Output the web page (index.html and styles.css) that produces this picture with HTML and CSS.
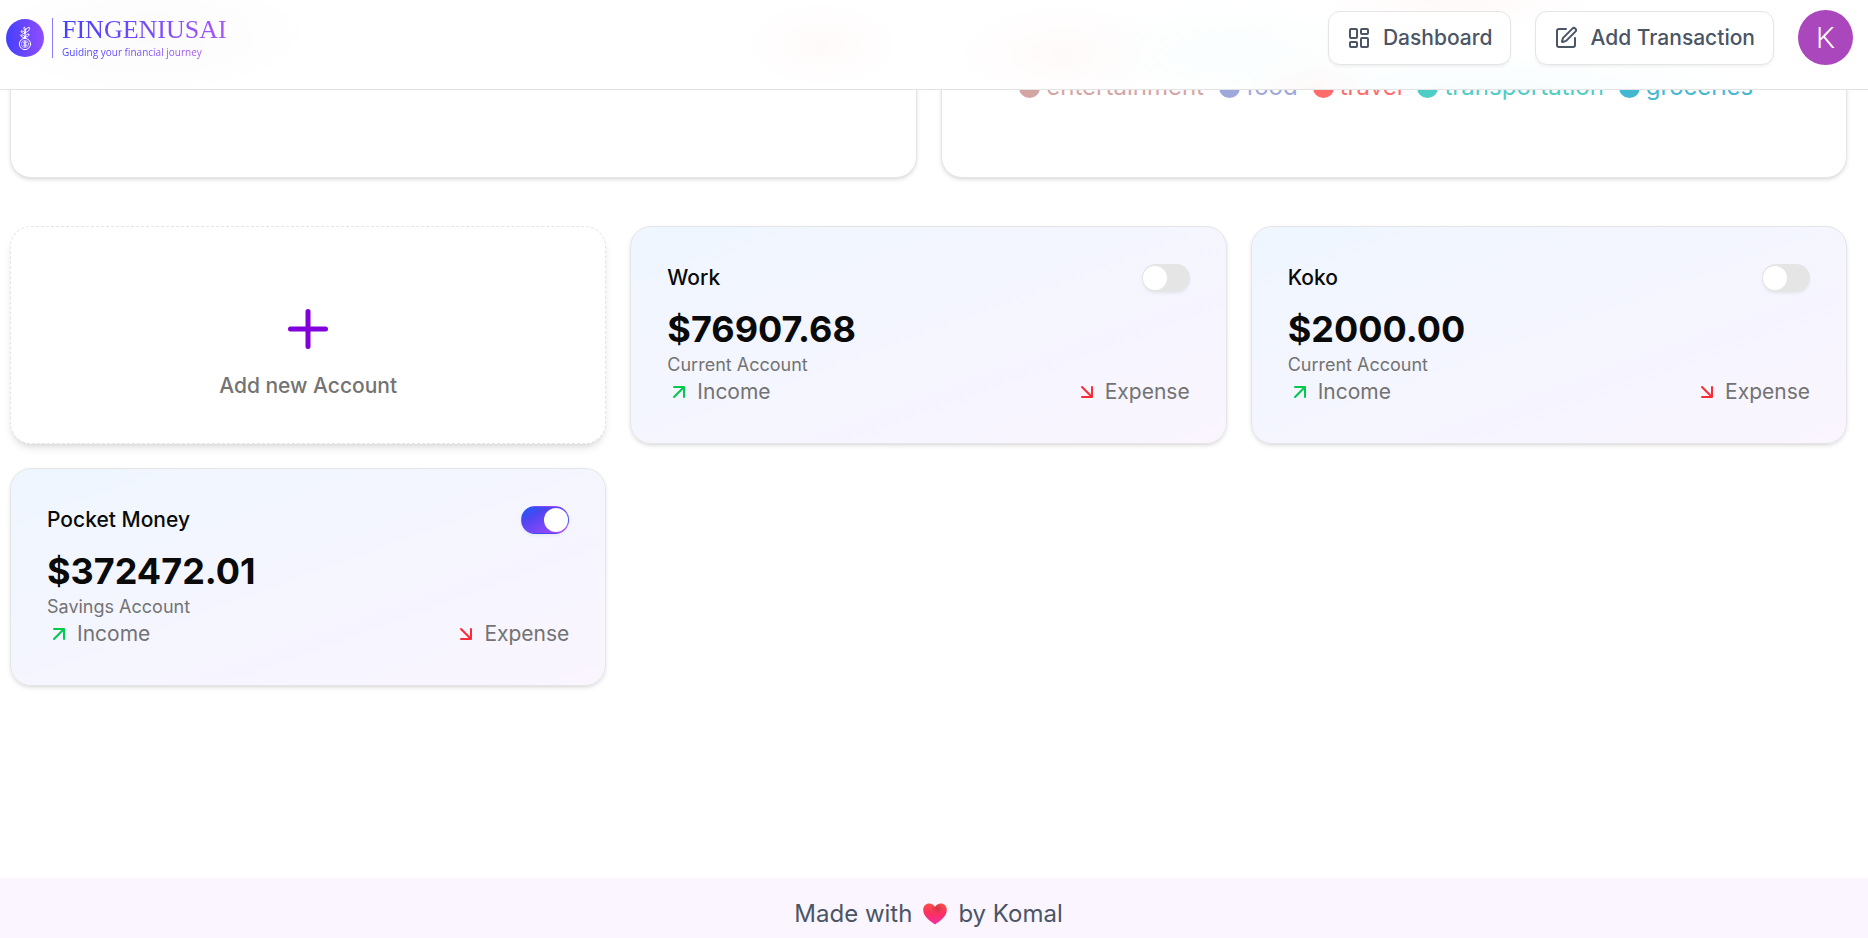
FILE: index.html
```html
<!DOCTYPE html>
<html lang="en">
<head>
<meta charset="utf-8">
<meta name="viewport" content="width=device-width, initial-scale=1">
<title>FinGeniusAI</title>
<link rel="stylesheet" href="styles.css">
</head>
<body>
<header class="header">
  <a class="brand" href="#">
    <svg class="brand-mark" viewBox="0 0 38 38" aria-hidden="true">
      <defs>
        <linearGradient id="brand-fill" x1="0" x2="1" y1="0" y2="0">
          <stop offset="0" stop-color="#4340ff"/>
          <stop offset="1" stop-color="#914dff"/>
        </linearGradient>
      </defs>
      <circle cx="19" cy="19" r="19" fill="url(#brand-fill)"/>
      <g fill="none" stroke="#fff" stroke-width="1" stroke-linecap="round" stroke-linejoin="round">
        <circle cx="19" cy="25" r="5.6"/>
        <circle cx="19" cy="25" r="3.6" stroke-width=".6"/>
        <path d="M20.5 23.4c-.6-.7-3-.7-3 .5s3 .8 3 2.100-2.400 1.200-3 .4M19 22.300v5.400"/>
        <path d="M19 19.400V12"/>
        <path d="M19 18.500c-2.600.3-4.200-.7-4.300-2.500 2.500-.2 4.100.6 4.300 2.500zM19 18c2.600.1 4.100-1 4.100-2.800-2.400-.1-4 .8-4.100 2.800zM19 14.500c-2.400.2-3.800-.8-3.900-2.500 2.300-.2 3.700.6 3.900 2.500zM19 13.400c0-2.400 1.300-4.500 4.400-5 .6 2.600-1.300 4.800-4.400 5zM19 11.200c-1.300-.7-1.400-1.900-.7-3.100 1.200.8 1.500 1.900.7 3.100z"/>
      </g>
    </svg>
    <span class="brand-rule"></span>
    <span class="brand-text">
      <span class="brand-name">FINGENIUSAI</span>
      <span class="brand-tag">Guiding your financial journey</span>
    </span>
  </a>
  <nav class="nav">
    <a class="btn" href="#">
      <svg class="icon" viewBox="0 0 24 24" aria-hidden="true"><rect width="7" height="9" x="3" y="3" rx="1"/><rect width="7" height="5" x="14" y="3" rx="1"/><rect width="7" height="9" x="14" y="12" rx="1"/><rect width="7" height="5" x="3" y="16" rx="1"/></svg>
      Dashboard
    </a>
    <a class="btn" href="#">
      <svg class="icon" viewBox="0 0 24 24" aria-hidden="true"><path d="M12 3H5a2 2 0 0 0-2 2v14a2 2 0 0 0 2 2h14a2 2 0 0 0 2-2v-7"/><path d="M18.375 2.625a1 1 0 0 1 3 3l-9.013 9.014a2 2 0 0 1-.853.505l-2.873.84a.5.5 0 0 1-.62-.62l.84-2.873a2 2 0 0 1 .506-.852z"/></svg>
      Add Transaction
    </a>
    <button class="avatar" type="button" aria-label="Open user menu">K</button>
  </nav>
</header>

<main class="main">
  <section class="charts">
    <div class="chart-card"></div>
    <div class="chart-card">
      <ul class="legend">
        <li class="legend-item entertainment"><span class="dot"></span>entertainment</li>
        <li class="legend-item food"><span class="dot"></span>food</li>
        <li class="legend-item travel"><span class="dot"></span>travel</li>
        <li class="legend-item transportation"><span class="dot"></span>transportation</li>
        <li class="legend-item groceries"><span class="dot"></span>groceries</li>
      </ul>
    </div>
  </section>

  <section class="accounts">
    <button class="add-card" type="button">
      <svg class="add-icon" viewBox="0 0 24 24" aria-hidden="true"><path d="M5 12h14M12 5v14"/></svg>
      Add new Account
    </button>

    <article class="account">
      <div class="account-head">
        <label class="account-name" for="default-work">Work</label>
        <input class="switch" id="default-work" type="checkbox" role="switch">
      </div>
      <div class="balance">$76907.68</div>
      <p class="account-type">Current Account</p>
      <div class="flows">
        <span class="flow"><svg class="icon up" viewBox="0 0 24 24" aria-hidden="true"><path d="M7 7h10v10M7 17 17 7"/></svg>Income</span>
        <span class="flow"><svg class="icon down" viewBox="0 0 24 24" aria-hidden="true"><path d="m7 7 10 10M17 7v10H7"/></svg>Expense</span>
      </div>
    </article>

    <article class="account">
      <div class="account-head">
        <label class="account-name" for="default-koko">Koko</label>
        <input class="switch" id="default-koko" type="checkbox" role="switch">
      </div>
      <div class="balance">$2000.00</div>
      <p class="account-type">Current Account</p>
      <div class="flows">
        <span class="flow"><svg class="icon up" viewBox="0 0 24 24" aria-hidden="true"><path d="M7 7h10v10M7 17 17 7"/></svg>Income</span>
        <span class="flow"><svg class="icon down" viewBox="0 0 24 24" aria-hidden="true"><path d="m7 7 10 10M17 7v10H7"/></svg>Expense</span>
      </div>
    </article>

    <article class="account">
      <div class="account-head">
        <label class="account-name" for="default-pocket">Pocket Money</label>
        <input class="switch" id="default-pocket" type="checkbox" role="switch" checked>
      </div>
      <div class="balance">$372472.01</div>
      <p class="account-type">Savings Account</p>
      <div class="flows">
        <span class="flow"><svg class="icon up" viewBox="0 0 24 24" aria-hidden="true"><path d="M7 7h10v10M7 17 17 7"/></svg>Income</span>
        <span class="flow"><svg class="icon down" viewBox="0 0 24 24" aria-hidden="true"><path d="m7 7 10 10M17 7v10H7"/></svg>Expense</span>
      </div>
    </article>
  </section>
</main>

<footer class="footer">
  <span>Made with</span>
  <svg class="heart" viewBox="0 0 24 22" role="img" aria-label="love">
    <defs>
      <linearGradient id="heart-fill" x1="0" x2="0" y1="0" y2="1">
        <stop offset="0" stop-color="#f8504a"/>
        <stop offset=".5" stop-color="#fb2f60"/>
        <stop offset="1" stop-color="#f22fa8"/>
      </linearGradient>
      <radialGradient id="heart-shade" cx=".6" cy=".22" r=".26">
        <stop offset="0" stop-color="#b52a3c" stop-opacity=".6"/>
        <stop offset="1" stop-color="#b52a3c" stop-opacity="0"/>
      </radialGradient>
      <path id="heart-shape" d="M12 21.500C8 18.800.2 13.600.2 7 .2 3.200 2.900.6 6.200.6c2.600 0 4.600 1.300 5.800 3.300C13.200 1.900 15.200.6 17.800.6c3.300 0 6 2.600 6 6.400 0 6.600-7.800 11.800-11.800 14.500z"/>
    </defs>
    <use href="#heart-shape" fill="url(#heart-fill)"/>
    <use href="#heart-shape" fill="url(#heart-shade)"/>
  </svg>
  <span>by Komal</span>
</footer>
</body>
</html>
```

FILE: styles.css
```css
* {
  box-sizing: border-box;
}

body {
  margin: 0;
  min-height: 100vh;
  display: flex;
  flex-direction: column;
  background: #fff;
  color: #0a0a0a;
  font-family: Inter, "Liberation Sans", sans-serif;
  font-size: 21px;
  line-height: 30px;
}

.header {
  position: sticky;
  top: 0;
  z-index: 10;
  display: flex;
  align-items: center;
  justify-content: space-between;
  padding: 10px 15px 24px 6px;
  border-bottom: 1px solid #e3e3e3;
  background:
    radial-gradient(ellipse 170px 60px at 8% 40%, #fbfbfb, transparent),
    radial-gradient(ellipse 80px 44px at 44% 50%, #fffafa, transparent),
    radial-gradient(ellipse 110px 50px at 57% 60%, #fffafa, transparent),
    radial-gradient(ellipse 170px 56px at 66% 60%, #fafefe, transparent),
    radial-gradient(ellipse 140px 30px at 78% 0%, #fff9f9, transparent),
    radial-gradient(ellipse 60px 40px at 70% 100%, #fff7f7, transparent),
    radial-gradient(ellipse 280px 40px at 80% 100%, #f8fdfe, transparent),
    #fff;
}

.brand {
  display: flex;
  align-items: center;
  gap: 8px;
  text-decoration: none;
}

.brand-mark {
  width: 38px;
  height: 38px;
}

.brand-rule {
  width: 1px;
  height: 40px;
  background: #8a7bff;
}

.brand-text {
  display: flex;
  flex-direction: column;
  padding-left: 1px;
}

.brand-name,
.brand-tag {
  align-self: flex-start;
  background: linear-gradient(90deg, #4340ff, #a855f7);
  background-clip: text;
  color: transparent;
}

.brand-name {
  font-family: "Liberation Serif", serif;
  font-size: 26px;
  line-height: 28px;
}

.brand-tag {
  font-family: "Open Sans", sans-serif;
  font-size: 10px;
  line-height: 16px;
}

.nav {
  display: flex;
  align-items: center;
  gap: 24px;
}

.btn {
  display: flex;
  align-items: center;
  gap: 12px;
  padding: 11px 18px;
  border: 1px solid #e5e5e5;
  border-radius: 12px;
  background: #fff;
  box-shadow: 0 2px 3px rgba(0, 0, 0, 0.05);
  color: #4a5565;
  font-weight: 500;
  text-decoration: none;
}

.icon {
  flex: none;
  width: 24px;
  height: 24px;
  fill: none;
  stroke: currentColor;
  stroke-width: 2;
  stroke-linecap: round;
  stroke-linejoin: round;
}

.avatar {
  width: 55px;
  height: 55px;
  padding: 0;
  border: 0;
  border-radius: 50%;
  background: #ab47bc;
  color: #fff;
  font-family: Roboto, sans-serif;
  font-size: 30px;
  font-weight: 300;
  line-height: 55px;
}

.main {
  flex: 1;
  display: flex;
  flex-direction: column;
  gap: 48px;
  padding: 0 21px 48px 10px;
}

/* The chart cards run on beneath the sticky header. */
.charts {
  display: grid;
  grid-template-columns: 1fr 1fr;
  gap: 24px;
  margin-top: -30px;
}

.chart-card {
  padding: 8px 16px 72px;
  border: 1px solid #e5e5e5;
  border-radius: 21px;
  background: #fff;
  box-shadow: 0 2px 4px rgba(0, 0, 0, 0.1), 0 2px 3px -2px rgba(0, 0, 0, 0.1);
}

.legend {
  display: flex;
  justify-content: center;
  margin: 0;
  padding: 0;
  list-style: none;
  font-size: 24px;
  line-height: 36px;
}

.legend-item {
  display: flex;
  align-items: center;
  gap: 6px;
  margin-right: 15px;
}

.dot {
  width: 21px;
  height: 21px;
  border-radius: 50%;
  background: currentColor;
}

.entertainment { color: #d4a5a5; }
.food { color: #9fa8da; }
.travel { color: #ff6b6b; }
.transportation { color: #4ecdc4; }
.groceries { color: #45b7d1; }

.accounts {
  display: grid;
  grid-template-columns: repeat(3, 1fr);
  gap: 24px;
}

.add-card {
  display: flex;
  flex-direction: column;
  align-items: center;
  justify-content: center;
  gap: 12px;
  padding: 30px 0 0;
  border: 1px dashed #e5e5e5;
  border-radius: 21px;
  background: #fff;
  box-shadow: 0 6px 9px -2px rgba(0, 0, 0, 0.1), 0 3px 6px -3px rgba(0, 0, 0, 0.1);
  color: #737373;
  font: inherit;
  font-weight: 500;
}

.add-icon {
  width: 60px;
  height: 60px;
  fill: none;
  stroke: #8200db;
  stroke-width: 2;
  stroke-linecap: round;
}

.account {
  padding: 36px;
  border: 1px solid #e5e5e5;
  border-radius: 21px;
  background: linear-gradient(to bottom right, #eff6ff, #faf5ff);
  box-shadow: 0 2px 4px rgba(0, 0, 0, 0.1), 0 2px 3px -2px rgba(0, 0, 0, 0.1);
}

.account-head {
  display: flex;
  align-items: center;
  justify-content: space-between;
  margin-bottom: 12px;
}

.account-name {
  font-weight: 500;
}

.switch {
  appearance: none;
  display: flex;
  align-items: center;
  width: 48px;
  height: 28px;
  margin: 0;
  border: 1px solid transparent;
  border-radius: 14px;
  background: #e5e5e5;
  box-shadow: 0 2px 3px rgba(0, 0, 0, 0.05);
}

.switch::before {
  content: "";
  width: 24px;
  height: 24px;
  border-radius: 50%;
  background: #fff;
}

.switch:checked {
  justify-content: flex-end;
  background: linear-gradient(to bottom right, #155dfc, #4f46f0 30%, #9348ff 80%, #ad46ff);
}

.balance {
  font-size: 36px;
  font-weight: 700;
  line-height: 48px;
}

.account-type {
  margin: 0;
  color: #737373;
  font-size: 18px;
  line-height: 24px;
}

.flows {
  display: flex;
  justify-content: space-between;
  color: #737373;
}

.flow {
  display: flex;
  align-items: center;
  gap: 6px;
}

.up { color: #00c950; }
.down { color: #fb2c36; }

.footer {
  display: flex;
  align-items: center;
  justify-content: center;
  gap: 11px;
  padding: 18px 11px 6px 0;
  background: #faf5ff;
  color: #4a5565;
  font-size: 24px;
  line-height: 36px;
}

.heart {
  width: 24px;
  height: 22px;
}
```
